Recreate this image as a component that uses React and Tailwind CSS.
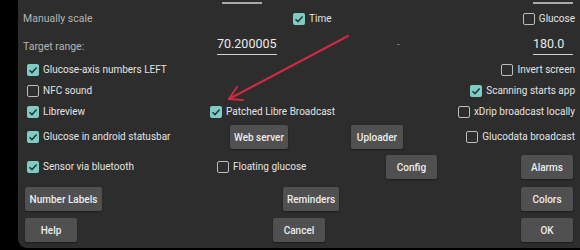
import React from 'react';

const Check = ({ checked, label }) => (
  <div className="flex items-center gap-[4px] text-[10px] text-[#e2e2e2] leading-none">
    {checked ? (
      <span className="w-[12px] h-[12px] rounded-[2px] bg-[#80cbc4] flex items-center justify-center">
        <svg width="10" height="10" viewBox="0 0 10 10">
          <path d="M1.5 5.2 L4 7.6 L8.6 2.6" fill="none" stroke="#1f3b38" strokeWidth="1.5" />
        </svg>
      </span>
    ) : (
      <span className="w-[12px] h-[12px] rounded-[2px] border-[1.5px] border-[#bdbdbd]" />
    )}
    <span>{label}</span>
  </div>
);

const Btn = ({ children, className = '' }) => (
  <div
    className={
      'h-[24px] bg-[#505050] rounded-[2px] flex items-center justify-center text-[10px] font-medium text-[#ececec] shadow-[0_1px_2px_rgba(0,0,0,0.4)] ' +
      className
    }
  >
    {children}
  </div>
);

export default function App() {
  return (
    <div className="w-[580px] h-[250px] bg-black flex overflow-hidden relative" style={{ fontFamily: 'Roboto, "Liberation Sans", sans-serif' }}>
      <div className="ml-[18px] flex-1 h-[248px] bg-[#2d2d2d] rounded-bl-[9px] pl-[5px] pr-[5px] flex flex-col">
        {/* cut-off fields above */}
        <div className="h-[6px] flex items-start pt-[2px]">
          <div className="ml-[199px] w-[40px] h-[2px] bg-[#a9a9a9]" />
          <div className="ml-auto mr-[2px] w-[40px] h-[2px] bg-[#a9a9a9]" />
        </div>

        <div className="h-[26px] flex items-center">
          <div className="w-[270px] text-[10.5px] text-[#b4b4b4]">Manually scale</div>
          <Check checked label="Time" />
          <div className="ml-auto">
            <Check label="Glucose" />
          </div>
        </div>

        <div className="h-[24px] flex items-start">
          <div className="w-[194px] mt-[7px] text-[10.5px] text-[#b4b4b4]">Target range:</div>
          <div className="w-[60px] mt-[4px] pb-[2px] border-b-[1.5px] border-[#d0d0d0] text-[12.5px] leading-[16px] text-[#eaeaea]">70.200005</div>
          <div className="ml-[120px] mt-[5px] text-[10px] text-[#8a8a8a]">-</div>
          <div className="ml-auto mr-[2px] w-[40px] mt-[4px] pb-[2px] border-b-[1.5px] border-[#d0d0d0] text-[12.5px] leading-[16px] text-[#eaeaea]">180.0</div>
        </div>

        <div className="h-[28px] flex items-center">
          <div className="pl-[4px]">
            <Check checked label="Glucose-axis numbers LEFT" />
          </div>
          <div className="ml-auto">
            <Check label="Invert screen" />
          </div>
        </div>

        <div className="h-[14px] flex items-center">
          <div className="pl-[4px]">
            <Check label="NFC sound" />
          </div>
          <div className="ml-auto">
            <Check checked label="Scanning starts app" />
          </div>
        </div>

        <div className="h-[28px] flex items-center">
          <div className="w-[187px] pl-[4px]">
            <Check checked label="Libreview" />
          </div>
          <Check checked label="Patched Libre Broadcast" />
          <div className="ml-auto">
            <Check label="xDrip broadcast locally" />
          </div>
        </div>

        <div className="h-[22px] flex items-center">
          <div className="w-[207px] pl-[4px]">
            <Check checked label="Glucose in android statusbar" />
          </div>
          <Btn className="w-[58px]">Web server</Btn>
          <Btn className="ml-[63px] w-[52px]">Uploader</Btn>
          <div className="ml-auto">
            <Check label="Glucodata broadcast" />
          </div>
        </div>

        <div className="h-[38px] flex items-center">
          <div className="w-[194px] pl-[4px]">
            <Check checked label="Sensor via bluetooth" />
          </div>
          <div className="w-[169px]">
            <Check label="Floating glucose" />
          </div>
          <Btn className="w-[51px]">Config</Btn>
          <Btn className="ml-auto mr-[2px] w-[52px]">Alarms</Btn>
        </div>

        <div className="mt-[1px] flex items-center">
          <Btn className="ml-[2px] w-[77px]">Number Labels</Btn>
          <Btn className="ml-[181px] w-[56px]">Reminders</Btn>
          <Btn className="ml-auto mr-[2px] w-[52px]">Colors</Btn>
        </div>

        <div className="mt-[7px] flex items-center">
          <Btn className="ml-[2px] w-[52px]">Help</Btn>
          <Btn className="ml-[196px] w-[52px]">Cancel</Btn>
          <Btn className="ml-auto mr-[2px] w-[52px]">OK</Btn>
        </div>
      </div>

      {/* annotation arrow */}
      <svg className="absolute left-0 top-0 pointer-events-none" width="580" height="250">
        <g stroke="#cf2a40" strokeWidth="2" strokeLinecap="round" fill="none">
          <line x1="348" y1="36" x2="229" y2="99" />
          <line x1="229" y1="99" x2="237" y2="87" />
          <line x1="229" y1="99" x2="243" y2="100" />
        </g>
      </svg>
    </div>
  );
}
